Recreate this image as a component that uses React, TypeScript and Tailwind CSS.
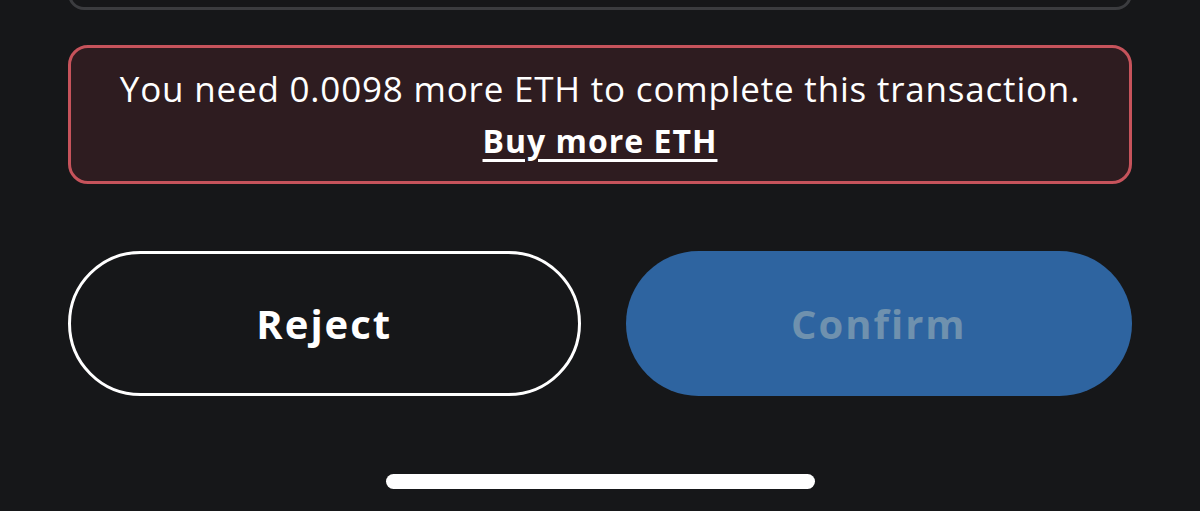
import React from 'react';

const font = { fontFamily: '"Open Sans", "Noto Sans", sans-serif' };

const InsufficientFunds: React.FC<{ amount: string }> = ({ amount }) => (
  <div className="mt-[35px] h-[139px] rounded-[20px] border-[3px] border-[#c6535b] bg-[#2e1c20] flex flex-col items-center justify-center text-white">
    <p className="text-[35px] leading-[50px] tracking-[0.8px]">
      You need {amount} more ETH to complete this transaction.
    </p>
    <a href="#" className="mt-[2px] text-[32px] leading-[50px] font-bold tracking-[1px] underline underline-offset-[6px] decoration-[3px]">
      Buy more ETH
    </a>
  </div>
);

export default function App() {
  return (
    <div className="h-[511px] w-[1200px] overflow-hidden bg-[#161719]" style={font}>
      <div className="px-[68px]">
        {/* bottom of the gas fee card above */}
        <div className="-mt-[30px] h-[40px] rounded-[16px] border-[3px] border-[#3b3c3f]" />

        <InsufficientFunds amount="0.0098" />

        <div className="mt-[67px] flex gap-[45px]">
          <button className="h-[145px] flex-1 rounded-full border-[3px] border-white text-[40px] font-bold tracking-[2px] text-white">
            Reject
          </button>
          <button disabled className="h-[145px] flex-1 rounded-full bg-[#2e64a0] text-[40px] font-bold tracking-[2px] text-[#6f91ae]">
            Confirm
          </button>
        </div>
      </div>

      <div className="mt-[78px] flex justify-center">
        <div className="h-[15px] w-[429px] rounded-full bg-white" />
      </div>
    </div>
  );
}
